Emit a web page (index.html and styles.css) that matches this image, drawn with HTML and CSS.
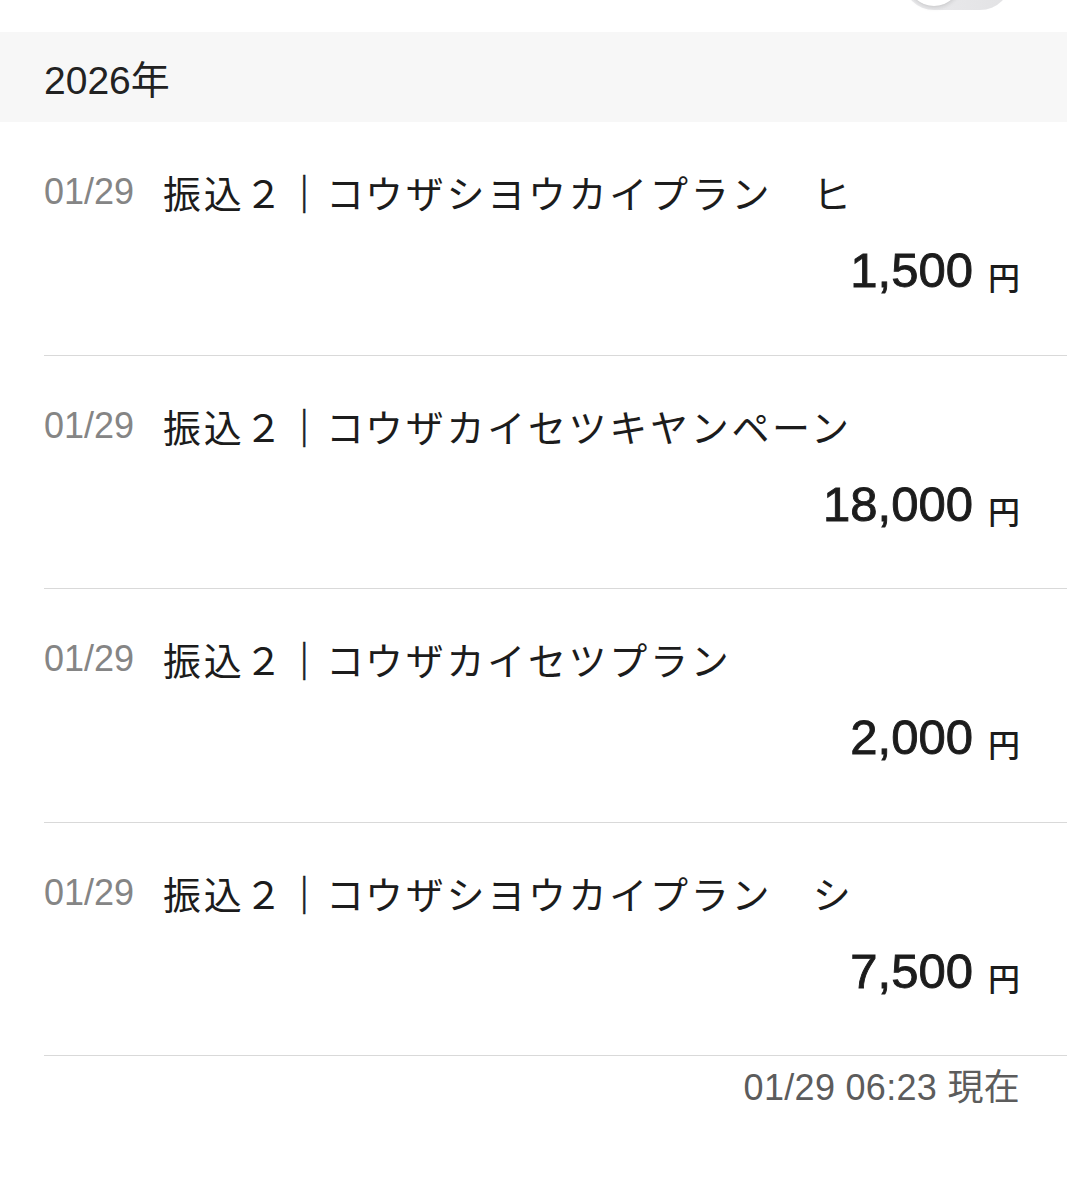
FILE: index.html
```html
<!DOCTYPE html>
<html lang="ja">

<head>
  <meta charset="UTF-8">
  <meta name="viewport" content="width=device-width, initial-scale=1.0">
  <title>入出金明細</title>
  <link rel="stylesheet" href="styles.css">
</head>

<body>
  <!-- 上のセクションのトグル（下端だけ見えている） -->
  <div class="top_bar">
    <div class="toggle">
      <div class="knob"></div>
    </div>
  </div>

  <div class="year_head">2026年</div>

  <ul class="history">
    <li class="item">
      <p class="item_title"><span class="date">01/29</span><span class="desc">振込２<span class="sep">｜</span>コウザシヨウカイプラン　ヒ</span></p>
      <p class="amount"><span class="num">1,500</span><span class="yen">円</span></p>
    </li>
    <li class="item">
      <p class="item_title"><span class="date">01/29</span><span class="desc">振込２<span class="sep">｜</span>コウザカイセツキヤンペーン</span></p>
      <p class="amount"><span class="num">18,000</span><span class="yen">円</span></p>
    </li>
    <li class="item">
      <p class="item_title"><span class="date">01/29</span><span class="desc">振込２<span class="sep">｜</span>コウザカイセツプラン</span></p>
      <p class="amount"><span class="num">2,000</span><span class="yen">円</span></p>
    </li>
    <li class="item">
      <p class="item_title"><span class="date">01/29</span><span class="desc">振込２<span class="sep">｜</span>コウザシヨウカイプラン　シ</span></p>
      <p class="amount"><span class="num">7,500</span><span class="yen">円</span></p>
    </li>
  </ul>

  <p class="updated">01/29 06:23 現在</p>
</body>

</html>
```

FILE: styles.css
```css
* {
  margin: 0;
  padding: 0;
  list-style: none;
  box-sizing: border-box;
}

body {
  background: #fff;
  color: #1c1c1c;
  font-family: "Liberation Sans", "Noto Sans CJK JP", sans-serif;
}

/* トグル */
.top_bar {
  height: 32px;
  overflow: hidden;
  display: flex;
  justify-content: flex-end;
  padding-right: 56px;
}

.toggle {
  width: 108px;
  height: 62px;
  margin-top: -52px;
  padding: 4px;
  border-radius: 31px;
  background: linear-gradient(90deg, #ececee, #e2e2e4);
  display: flex;
  align-items: flex-end;
}

.knob {
  width: 54px;
  height: 54px;
  border-radius: 50%;
  background: #fff;
  box-shadow: 0 2px 4px rgba(0, 0, 0, .12), 0 0 1px rgba(0, 0, 0, .1);
}

/* 年 */
.year_head {
  height: 90px;
  background: #f7f7f7;
  padding-left: 44px;
  display: flex;
  align-items: center;
  font-size: 39px;
  color: #222;
}

/* 明細 */
.history {
  margin-left: 44px;
}

.item {
  height: 233.5px;
  padding: 45px 47px 0 0;
  border-bottom: 1px solid #d9d9d9;
}

.item_title {
  display: flex;
  align-items: center;
  height: 50px;
  line-height: 50px;
  white-space: nowrap;
}

.date {
  font-size: 36px;
  color: #858585;
  margin-right: 29px;
}

.desc {
  font-family: "Noto Sans CJK JP", sans-serif;
  font-size: 38px;
  letter-spacing: 2.7px;
  color: #1c1c1c;
}

.sep {
  -webkit-text-stroke: .6px #1c1c1c;
}

.amount {
  margin-top: 23px;
  height: 60px;
  line-height: 60px;
  display: flex;
  justify-content: flex-end;
  align-items: baseline;
}

.num {
  font-size: 49px;
  -webkit-text-stroke: .9px #1c1c1c;
}

.yen {
  font-family: "Noto Sans CJK JP", sans-serif;
  font-size: 32px;
  font-weight: 500;
  margin-left: 15px;
  position: relative;
  top: 3px;
}

.updated {
  text-align: right;
  padding: 12px 47px 0 0;
  line-height: 40px;
  font-size: 36px;
  letter-spacing: .3px;
  color: #5c5c5c;
}
```
